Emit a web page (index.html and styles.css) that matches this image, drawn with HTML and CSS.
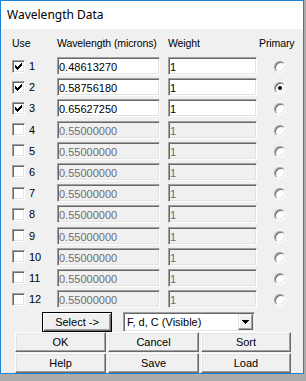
FILE: index.html
```html
<!DOCTYPE html>
<html lang="en">
<head>
  <meta charset="UTF-8" />
  <title>Wavelength Data</title>
  <link rel="stylesheet" href="styles.css">
</head>
<body>
  <div class="window">
    <div class="titlebar">Wavelength Data</div>
    <div class="client">
      <div class="grid">
        <div class="hdr">Use</div>
        <div class="hdr">Wavelength (microns)</div>
        <div class="hdr">Weight</div>
        <div class="hdr">Primary</div>

        <div class="use"><span class="check on"><svg width="7" height="7" viewBox="0 0 7 7"><path d="M6 0h1v1h-1zM5 1h2v1h-2zM0 2h1v1h-1zM4 2h3v1h-3zM0 3h2v1h-2zM3 3h3v1h-3zM0 4h5v1h-5zM1 5h3v1h-3zM2 6h1v1h-1z"/></svg></span>1</div>
        <input class="field wl" value="0.48613270">
        <input class="field wt" value="1">
        <div class="prim"><span class="radio"></span></div>

        <div class="use"><span class="check on"><svg width="7" height="7" viewBox="0 0 7 7"><path d="M6 0h1v1h-1zM5 1h2v1h-2zM0 2h1v1h-1zM4 2h3v1h-3zM0 3h2v1h-2zM3 3h3v1h-3zM0 4h5v1h-5zM1 5h3v1h-3zM2 6h1v1h-1z"/></svg></span>2</div>
        <input class="field wl" value="0.58756180">
        <input class="field wt" value="1">
        <div class="prim"><span class="radio sel"></span></div>

        <div class="use"><span class="check on"><svg width="7" height="7" viewBox="0 0 7 7"><path d="M6 0h1v1h-1zM5 1h2v1h-2zM0 2h1v1h-1zM4 2h3v1h-3zM0 3h2v1h-2zM3 3h3v1h-3zM0 4h5v1h-5zM1 5h3v1h-3zM2 6h1v1h-1z"/></svg></span>3</div>
        <input class="field wl" value="0.65627250">
        <input class="field wt" value="1">
        <div class="prim"><span class="radio"></span></div>

        <div class="use"><span class="check"></span>4</div>
        <input class="field wl" value="0.55000000" disabled>
        <input class="field wt" value="1" disabled>
        <div class="prim"><span class="radio"></span></div>

        <div class="use"><span class="check"></span>5</div>
        <input class="field wl" value="0.55000000" disabled>
        <input class="field wt" value="1" disabled>
        <div class="prim"><span class="radio"></span></div>

        <div class="use"><span class="check"></span>6</div>
        <input class="field wl" value="0.55000000" disabled>
        <input class="field wt" value="1" disabled>
        <div class="prim"><span class="radio"></span></div>

        <div class="use"><span class="check"></span>7</div>
        <input class="field wl" value="0.55000000" disabled>
        <input class="field wt" value="1" disabled>
        <div class="prim"><span class="radio"></span></div>

        <div class="use"><span class="check"></span>8</div>
        <input class="field wl" value="0.55000000" disabled>
        <input class="field wt" value="1" disabled>
        <div class="prim"><span class="radio"></span></div>

        <div class="use"><span class="check"></span>9</div>
        <input class="field wl" value="0.55000000" disabled>
        <input class="field wt" value="1" disabled>
        <div class="prim"><span class="radio"></span></div>

        <div class="use"><span class="check"></span>10</div>
        <input class="field wl" value="0.55000000" disabled>
        <input class="field wt" value="1" disabled>
        <div class="prim"><span class="radio"></span></div>

        <div class="use"><span class="check"></span>11</div>
        <input class="field wl" value="0.55000000" disabled>
        <input class="field wt" value="1" disabled>
        <div class="prim"><span class="radio"></span></div>

        <div class="use"><span class="check"></span>12</div>
        <input class="field wl" value="0.55000000" disabled>
        <input class="field wt" value="1" disabled>
        <div class="prim"><span class="radio"></span></div>
      </div>

      <div class="select-row">
        <button class="btn default">Select -&gt;</button>
        <div class="combo">
          <span class="combo-text">F, d, C (Visible)</span>
          <span class="drop"><svg width="7" height="4" viewBox="0 0 7 4"><path d="M0 0h7v1h-7zM1 1h5v1h-5zM2 2h3v1h-3zM3 3h1v1h-1z"/></svg></span>
        </div>
      </div>

      <div class="buttons">
        <button class="btn">OK</button>
        <button class="btn">Cancel</button>
        <button class="btn">Sort</button>
        <button class="btn">Help</button>
        <button class="btn">Save</button>
        <button class="btn">Load</button>
      </div>
    </div>
  </div>
</body>
</html>
```

FILE: styles.css
```css
body {
  margin: 0;
  background: #ababab;
  font-family: "Liberation Sans", Arial, sans-serif;
  font-size: 11px;
  color: #000;
}
.window {
  width: 302px;
  height: 372px;
  border: 1px solid #1a85d8;
  background: #f0f0f0;
  overflow: hidden;
}
.titlebar {
  height: 28px;
  background: #fff;
  font-family: "Noto Sans", "Segoe UI", sans-serif;
  font-size: 12px;
  line-height: 28px;
  padding-left: 6px;
}
.client {
  padding: 8px 0 0 11px;
}
.grid {
  display: grid;
  grid-template-columns: 45px 111px 91px 1fr;
  grid-template-rows: 20px;
  grid-auto-rows: 21.2px;
}
.hdr {
  font-size: 10.5px;
  line-height: 13px;
  letter-spacing: -0.1px;
}
.use {
  display: flex;
  align-items: center;
  gap: 4px;
  height: 18px;
}
.check {
  box-sizing: border-box;
  width: 13px;
  height: 13px;
  display: flex;
  padding: 2px 0 0 2px;
  background: #fff;
  border: 1px solid;
  border-color: #a0a0a0 #fff #fff #a0a0a0;
  box-shadow: inset 1px 1px #696969, inset -1px -1px #e3e3e3;
}
.check svg {
  shape-rendering: crispEdges;
}
.field {
  box-sizing: border-box;
  height: 18px;
  margin: 0;
  padding: 2px 0 0 1px;
  font: inherit;
  color: #000;
  background: #fff;
  border: 1px solid;
  border-color: #a0a0a0 #fff #fff #a0a0a0;
  box-shadow: inset 1px 1px #696969, inset -1px -1px #e3e3e3;
  outline: none;
}
.field:disabled {
  background: #f0f0f0;
  color: #6d6d6d;
}
.wl {
  width: 103px;
}
.wt {
  width: 89px;
}
.prim {
  padding: 4px 0 0 15px;
}
.radio {
  box-sizing: border-box;
  display: flex;
  align-items: center;
  justify-content: center;
  width: 12px;
  height: 12px;
  border-radius: 50%;
  background: #fff;
  border: 1px solid;
  border-color: #a0a0a0 #fff #fff #a0a0a0;
  box-shadow: inset 1px 1px #696969, inset -1px -1px #e3e3e3;
}
.radio.sel::after {
  content: "";
  width: 4px;
  height: 4px;
  border-radius: 50%;
  background: #000;
}
.btn {
  box-sizing: border-box;
  height: 20px;
  margin: 0;
  padding: 0;
  font: inherit;
  color: #000;
  background: #f0f0f0;
  border: 1px solid;
  border-color: #fff #696969 #696969 #fff;
  box-shadow: inset -1px -1px #a0a0a0, inset 1px 1px #e3e3e3;
}
.btn.default {
  border-color: #000;
  box-shadow: inset 1px 1px #fff, inset -1px -1px #696969, inset -2px -2px #a0a0a0;
}
.select-row {
  display: flex;
  gap: 11px;
  margin-top: 1px;
  padding-left: 30px;
}
.select-row .btn {
  width: 70px;
}
.combo {
  box-sizing: border-box;
  width: 132px;
  height: 20px;
  display: flex;
  align-items: center;
  background: #fff;
  border: 1px solid;
  border-color: #a0a0a0 #fff #fff #a0a0a0;
  box-shadow: inset 1px 1px #696969, inset -1px -1px #e3e3e3;
  padding: 1px 1px 1px 3px;
}
.combo-text {
  flex: 1;
}
.drop {
  box-sizing: border-box;
  width: 15px;
  height: 16px;
  display: flex;
  align-items: center;
  justify-content: center;
  background: #f0f0f0;
  border: 1px solid;
  border-color: #e3e3e3 #696969 #696969 #e3e3e3;
  box-shadow: inset -1px -1px #a0a0a0, inset 1px 1px #fff;
}
.drop svg {
  shape-rendering: crispEdges;
}
.buttons {
  display: grid;
  grid-template-columns: 91px 91px 90px;
  column-gap: 2px;
  row-gap: 1px;
  padding-left: 3px;
}
```
